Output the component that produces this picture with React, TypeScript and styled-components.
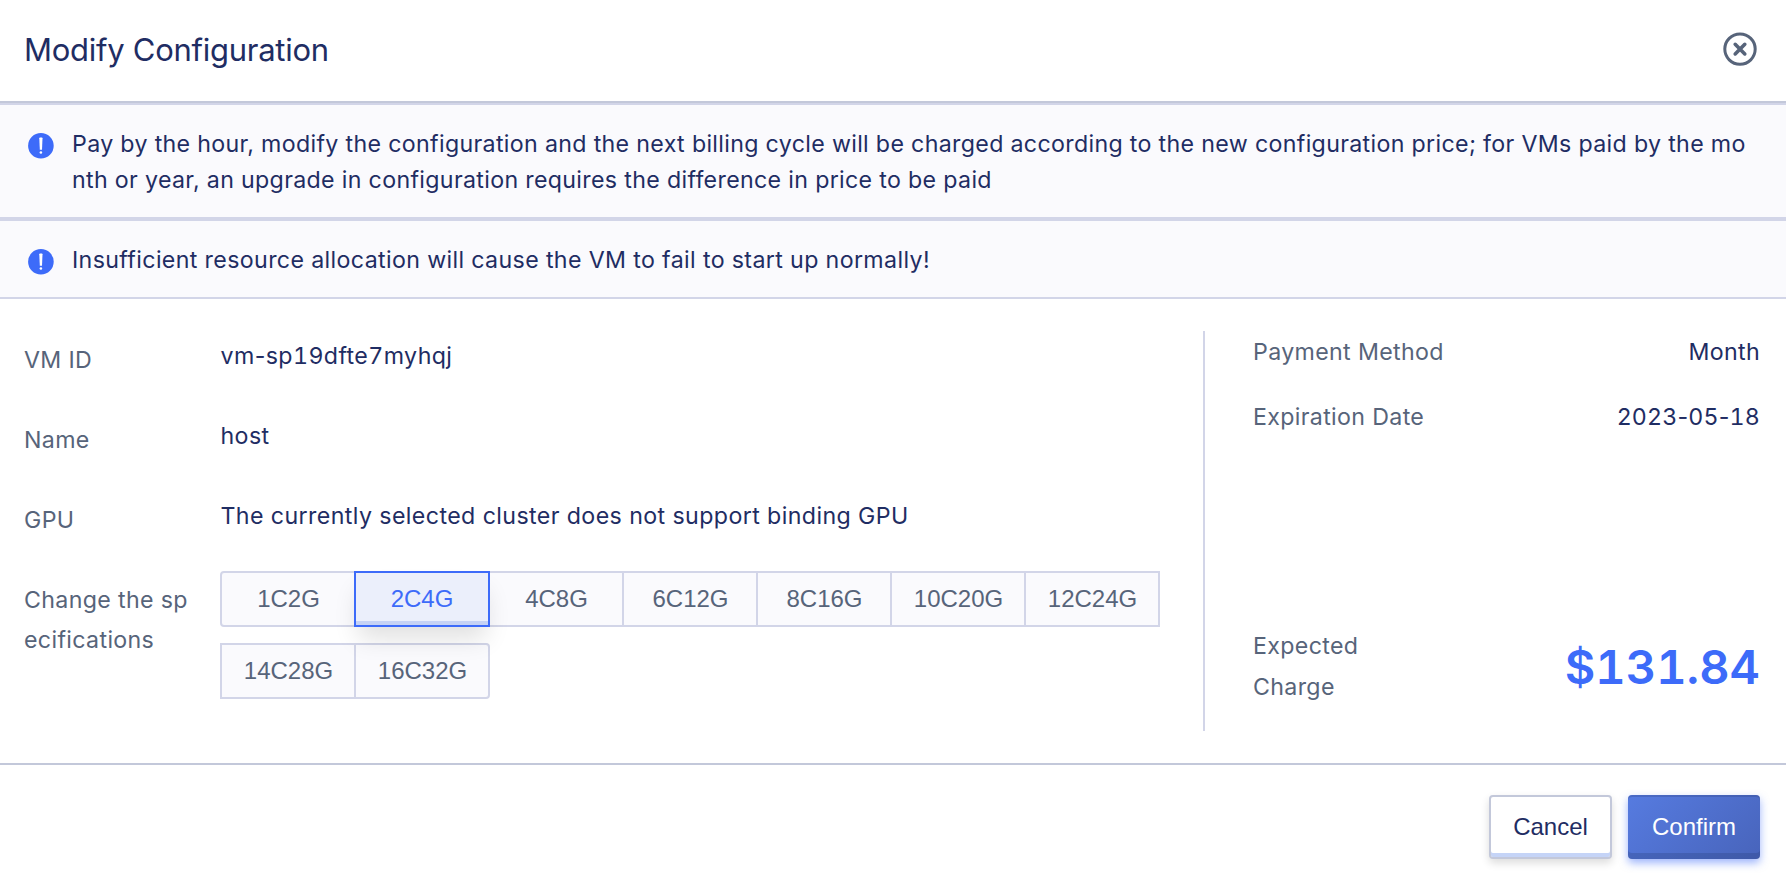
import React from 'react';
import styled, { createGlobalStyle, css } from 'styled-components';

const GlobalStyle = createGlobalStyle`
  *, *::before, *::after { box-sizing: border-box; }
  body { margin: 0; background: #fff; }
`;

const Dialog = styled.div`
  width: 100%;
  height: 886px;
  display: flex;
  flex-direction: column;
  background: #fff;
  color: #1f2d63;
  font-family: Inter, 'Liberation Sans', sans-serif;
  font-size: 23.2px;
  letter-spacing: 0.34px;
  white-space: nowrap;
  overflow: hidden;
`;

const Header = styled.header`
  height: 103px;
  flex: none;
  display: flex;
  align-items: center;
  justify-content: space-between;
  padding: 0 29px 4px 24px;
  border-bottom: 2px solid #c3c8da;
`;

const Title = styled.h1`
  margin: 3px 0 0;
  font-size: 31px;
  font-weight: 400;
  line-height: 44px;
  letter-spacing: -0.27px;
`;

const CloseButton = styled.button`
  display: flex;
  padding: 0;
  border: 0;
  background: none;
  color: #57647a;
`;

const Alert = styled.div<{ $spacing?: number }>`
  flex: none;
  display: flex;
  gap: 18px;
  padding: 20px 24px 20px 28px;
  border: solid #d2d5e8;
  border-width: 2px 0;
  background: #fafafd;
  line-height: 36px;
  letter-spacing: ${(p) => p.$spacing ?? 0.33}px;

  svg { flex: none; margin-top: 8px; }
  p { margin: 1px 0 -1px; }
`;

const Body = styled.main`
  flex: none;
  height: 464px;
  padding: 32px 26px 32px 24px;
  display: flex;
`;

const Details = styled.dl`
  flex: 1;
  margin: 0;
  padding-top: 9px;
  display: flex;
  flex-direction: column;
  gap: 40px;
`;

const Field = styled.div`
  display: flex;
  line-height: 40px;
`;

const Label = styled.dt`
  width: 196px;
  flex: none;
  color: #57647a;
`;

const Value = styled.dd`
  margin: -4px 0 4px;
  padding-left: 0.5px;
  letter-spacing: 0.4px;
`;

const Digits = styled.span`
  font-variant-numeric: tabular-nums;
`;

const SpecGroup = styled.dd`
  margin: -9px 0 0;
  width: 942px;
  display: flex;
  flex-wrap: wrap;
  row-gap: 16px;
`;

const Spec = styled.button<{ $active?: boolean; $corners?: string }>`
  width: 136px;
  height: 56px;
  margin: 0 -2px 0 0;
  padding: 0 0 0 1px;
  border: 2px solid #d2d5e8;
  border-radius: ${(p) => p.$corners ?? '0'};
  background: #fafafd;
  color: #57647a;
  font: 24px 'Liberation Sans', Arial, sans-serif;
  ${(p) =>
    p.$active &&
    css`
      position: relative;
      z-index: 1;
      padding: 0;
      border-color: #3d6bf9;
      background: #ebeffb;
      color: #3d6bf9;
      box-shadow: inset 0 -4px 0 #c5d2f5, 0 16px 24px -4px rgba(0, 0, 0, 0.12);
    `}
`;

const Summary = styled.aside`
  width: 557px;
  padding-left: 48px;
  border-left: 2px solid #d2d5e8;
  display: flex;
  flex-direction: column;
`;

const SummaryRow = styled.div`
  height: 65px;
  padding-top: 1px;
  display: flex;
  justify-content: space-between;
  line-height: 41px;
`;

const SummaryLabel = styled.span`
  color: #57647a;
`;

const SummaryValue = styled.span<{ $spacing?: number }>`
  letter-spacing: ${(p) => p.$spacing ?? 0.34}px;
`;

const Charge = styled.div`
  margin-top: auto;
  padding-bottom: 23px;
  display: flex;
  align-items: center;
  justify-content: space-between;
  line-height: 41px;
`;

const Price = styled.strong`
  margin-bottom: 2px;
  font-size: 47px;
  font-weight: 600;
  letter-spacing: 0;
  font-variant-numeric: tabular-nums;
  color: #3d6bf9;
`;

const Footer = styled.footer`
  flex: 1;
  display: flex;
  justify-content: flex-end;
  gap: 16px;
  padding: 30px 26px 0;
  border-top: 2px solid #c3c8da;
`;

const Button = styled.button<{ $primary?: boolean }>`
  width: ${(p) => (p.$primary ? 132 : 123)}px;
  height: 64px;
  padding: 0;
  border: 2px solid #c3c8da;
  border-radius: 4px;
  background: #fff;
  color: #1f2d63;
  font: 24px 'Liberation Sans', Arial, sans-serif;
  box-shadow: inset 0 -4px 0 #c5d4f7, 0 4px 8px rgba(0, 0, 0, 0.14);
  ${(p) =>
    p.$primary &&
    css`
      border: 0;
      color: #fff;
      background: linear-gradient(135deg, #567be0, #4864bb);
      box-shadow: inset 0 2px 0 rgba(40, 60, 120, 0.25), inset 0 -6px 0 rgba(40, 60, 120, 0.28),
        0 4px 8px rgba(61, 107, 249, 0.5);
    `}
`;

const CloseIcon = () => (
  <svg width="34" height="34" viewBox="0 0 34 34" fill="none" stroke="currentColor" strokeLinecap="round">
    <circle cx="17" cy="17.1" r="15.2" strokeWidth="3" />
    <path d="M12.2 12.3l9.6 9.6M21.8 12.3l-9.6 9.6" strokeWidth="3.6" />
  </svg>
);

const InfoIcon = () => (
  <svg width="26" height="26" viewBox="0 0 26 26">
    <circle cx="12.9" cy="12.8" r="12.8" fill="#3d6bf9" />
    <path d="M11.3 5.2q0-.7.7-.7h1.8q.7 0 .7.7L14 16.8h-2.2z" fill="#fff" />
    <circle cx="12.9" cy="19.5" r="1.3" fill="#fff" />
  </svg>
);

/* Numbers keep equal digit widths while punctuation stays proportional. */
const Numeric = ({ text }: { text: string }) => (
  <>
    {text.split(/(\d+)/).map((part, i) => (i % 2 ? <Digits key={i}>{part}</Digits> : part))}
  </>
);

const specs = ['1C2G', '2C4G', '4C8G', '6C12G', '8C16G', '10C20G', '12C24G', '14C28G', '16C32G'];

const corners: Record<string, string> = {
  '1C2G': '4px 0 0 4px',
  '16C32G': '0 4px 4px 0',
};

const fields = [
  ['VM ID', 'vm-sp19dfte7myhqj'],
  ['Name', 'host'],
  ['GPU', 'The currently selected cluster does not support binding GPU'],
];

export default function App() {
  return (
    <>
      <GlobalStyle />
      <Dialog>
        <Header>
          <Title>Modify Configuration</Title>
          <CloseButton aria-label="Close">
            <CloseIcon />
          </CloseButton>
        </Header>
        <Alert>
          <InfoIcon />
          <p>
            Pay by the hour, modify the configuration and the next billing cycle will be charged according to the new
            configuration price; for VMs paid by the mo
            <br />
            nth or year, an upgrade in configuration requires the difference in price to be paid
          </p>
        </Alert>
        <Alert $spacing={0.36}>
          <InfoIcon />
          <p>Insufficient resource allocation will cause the VM to fail to start up normally!</p>
        </Alert>
        <Body>
          <Details>
            {fields.map(([label, value]) => (
              <Field key={label}>
                <Label>{label}</Label>
                <Value>
                  <Numeric text={value} />
                </Value>
              </Field>
            ))}
            <Field>
              <Label>
                Change the sp
                <br />
                ecifications
              </Label>
              <SpecGroup>
                {specs.map((s) => (
                  <Spec key={s} $active={s === '2C4G'} $corners={corners[s]}>
                    {s}
                  </Spec>
                ))}
              </SpecGroup>
            </Field>
          </Details>
          <Summary>
            <SummaryRow>
              <SummaryLabel>Payment Method</SummaryLabel>
              <SummaryValue>Month</SummaryValue>
            </SummaryRow>
            <SummaryRow>
              <SummaryLabel>Expiration Date</SummaryLabel>
              <SummaryValue $spacing={0.17}>
                <Numeric text="2023-05-18" />
              </SummaryValue>
            </SummaryRow>
            <Charge>
              <SummaryLabel>
                Expected
                <br />
                Charge
              </SummaryLabel>
              <Price>$131.84</Price>
            </Charge>
          </Summary>
        </Body>
        <Footer>
          <Button>Cancel</Button>
          <Button $primary>Confirm</Button>
        </Footer>
      </Dialog>
    </>
  );
}
